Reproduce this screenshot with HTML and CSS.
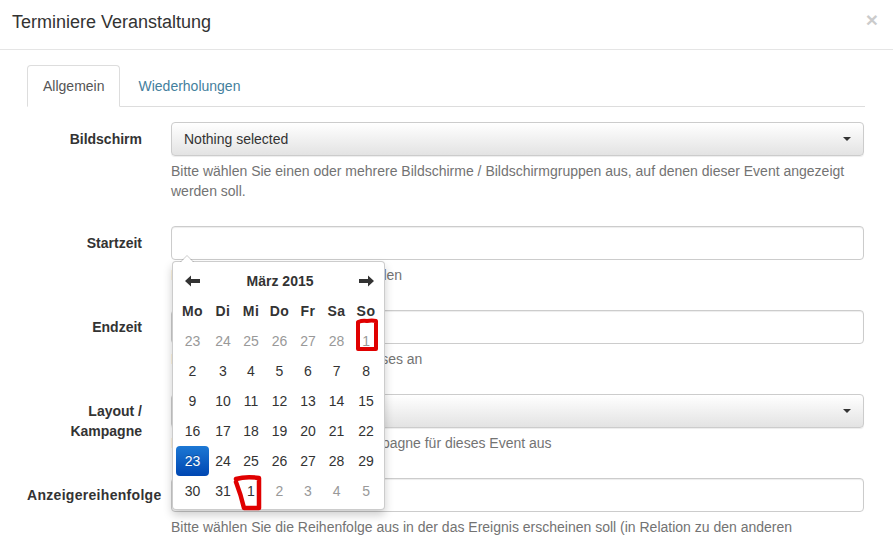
FILE: index.html
```html
<!DOCTYPE html>
<html>
<head>
    <title>Terminiere Veranstaltung</title>
    <link rel="stylesheet" href="styles.css">
</head>
<body>
    <div class="modal-header">
        <button class="close" type="button">&times;</button>
        <h4 class="modal-title">Terminiere Veranstaltung</h4>
    </div>

    <div class="modal-body">
        <ul class="nav-tabs">
            <li class="active"><a href="#">Allgemein</a></li>
            <li><a href="#">Wiederholungen</a></li>
        </ul>

        <div class="form">
            <div class="form-group">
                <label class="control-label">Bildschirm</label>
                <div class="control">
                    <button class="select-btn" type="button">
                        <span>Nothing selected</span>
                        <span class="caret"></span>
                    </button>
                    <p class="help-block">Bitte wählen Sie einen oder mehrere Bildschirme / Bildschirmgruppen aus, auf denen dieser Event angezeigt werden soll.</p>
                </div>
            </div>

            <div class="form-group">
                <label class="control-label">Startzeit</label>
                <div class="control">
                    <div class="date-wrap">
                        <input type="text" class="form-control">

                        <div class="datepicker">
                            <table>
                                <colgroup>
                                    <col style="width: 33px">
                                    <col style="width: 28px">
                                    <col style="width: 28px">
                                    <col style="width: 29px">
                                    <col style="width: 28px">
                                    <col style="width: 29px">
                                    <col style="width: 30px">
                                </colgroup>
                                <thead>
                                    <tr>
                                        <th class="prev">
                                            <svg width="15" height="12" viewBox="0 0 15 12"><path d="M0 6 L6 0.5 L6 4 L15 4 L15 8 L6 8 L6 11.5 Z" fill="#333"/></svg>
                                        </th>
                                        <th class="switch" colspan="5">März 2015</th>
                                        <th class="next">
                                            <svg width="15" height="12" viewBox="0 0 15 12"><path d="M15 6 L9 0.5 L9 4 L0 4 L0 8 L9 8 L9 11.5 Z" fill="#333"/></svg>
                                        </th>
                                    </tr>
                                    <tr class="dow">
                                        <th>Mo</th><th>Di</th><th>Mi</th><th>Do</th><th>Fr</th><th>Sa</th><th>So</th>
                                    </tr>
                                </thead>
                                <tbody>
                                    <tr>
                                        <td class="old">23</td><td class="old">24</td><td class="old">25</td><td class="old">26</td><td class="old">27</td><td class="old">28</td><td class="old">1</td>
                                    </tr>
                                    <tr>
                                        <td>2</td><td>3</td><td>4</td><td>5</td><td>6</td><td>7</td><td>8</td>
                                    </tr>
                                    <tr>
                                        <td>9</td><td>10</td><td>11</td><td>12</td><td>13</td><td>14</td><td>15</td>
                                    </tr>
                                    <tr>
                                        <td>16</td><td>17</td><td>18</td><td>19</td><td>20</td><td>21</td><td>22</td>
                                    </tr>
                                    <tr>
                                        <td class="active">23</td><td>24</td><td>25</td><td>26</td><td>27</td><td>28</td><td>29</td>
                                    </tr>
                                    <tr>
                                        <td>30</td><td>31</td><td>1</td><td class="new">2</td><td class="new">3</td><td class="new">4</td><td class="new">5</td>
                                    </tr>
                                </tbody>
                            </table>

                            <!-- red markers drawn on the screenshot -->
                            <svg class="mark mark-sun" width="24" height="34" viewBox="0 0 24 34">
                                <path d="M3 4 Q8 2 12 3 Q17 2 21 3 L21 31 L3 31 Z" fill="none" stroke="#e00000" stroke-width="4" stroke-linejoin="round"/>
                            </svg>
                            <svg class="mark mark-wed" width="30" height="40" viewBox="0 0 30 40">
                                <path d="M4 6 Q14 3 27 5 L27 35 L12 35 Q9 22 4 9" fill="none" stroke="#e00000" stroke-width="4.5" stroke-linejoin="round" stroke-linecap="round"/>
                            </svg>
                        </div>
                    </div>
                    <p class="help-block">Bitte Startdatum und Startzeit wählen</p>
                </div>
            </div>

            <div class="form-group">
                <label class="control-label">Endzeit</label>
                <div class="control">
                    <input type="text" class="form-control">
                    <p class="help-block">Bitte geben Sie das Ende des Kurses an</p>
                </div>
            </div>

            <div class="form-group">
                <label class="control-label">Layout / Kampagne</label>
                <div class="control">
                    <button class="select-btn" type="button">
                        <span></span>
                        <span class="caret"></span>
                    </button>
                    <p class="help-block">Bitte wählen Sie Layout oder Kampagne für dieses Event aus</p>
                </div>
            </div>

            <div class="form-group">
                <label class="control-label wide">Anzeigereihenfolge</label>
                <div class="control">
                    <input type="text" class="form-control">
                    <p class="help-block">Bitte wählen Sie die Reihenfolge aus in der das Ereignis erscheinen soll (in Relation zu den anderen Ereignissen)</p>
                </div>
            </div>
        </div>
    </div>
</body>
</html>
```

FILE: styles.css
```css
body {
    margin: 0;
    font-family: "Liberation Sans", Arial, sans-serif;
    font-size: 14px;
    line-height: 20px;
    color: #333;
    background: #fff;
    overflow: hidden;
}
.modal-header {
    padding: 9px 15px 14px 12px;
    border-bottom: 1px solid #e5e5e5;
    height: 26px;
}
.modal-title {
    margin: 0;
    font-size: 18px;
    font-weight: normal;
    line-height: 26px;
}
.close {
    float: right;
    margin-top: 0;
    padding: 0;
    border: none;
    background: none;
    font-family: "Liberation Sans", Arial, sans-serif;
    font-size: 21px;
    font-weight: bold;
    line-height: 1;
    color: #000;
    opacity: 0.2;
    cursor: pointer;
}
.modal-body {
    padding: 15px 28px 0 27px;
}
.nav-tabs {
    list-style: none;
    margin: 0;
    padding: 0;
    display: flex;
    border-bottom: 1px solid #ddd;
}
.nav-tabs li {
    margin-right: 2px;
    margin-bottom: -1px;
}
.nav-tabs a {
    display: block;
    padding: 10px 15px;
    border: 1px solid transparent;
    border-radius: 4px 4px 0 0;
    color: #44809d;
    text-decoration: none;
}
.nav-tabs .active a {
    color: #555;
    background: #fff;
    border-color: #ddd #ddd transparent;
}
.form {
    padding-top: 15px;
}
.form-group {
    display: grid;
    grid-template-columns: 130px 1fr;
    margin-bottom: 15px;
}
.control-label {
    padding: 7px 15px 0 0;
    text-align: right;
    font-weight: bold;
}
.control-label.wide {
    padding-right: 0;
    text-align: left;
    white-space: nowrap;
    letter-spacing: 0.3px;
}
.control {
    padding: 0 1px 0 14px;
}
.form-control {
    display: block;
    box-sizing: border-box;
    width: 100%;
    height: 34px;
    padding: 6px 12px;
    border: 1px solid #ccc;
    border-radius: 4px;
    box-shadow: inset 0 1px 1px rgba(0, 0, 0, 0.075);
    font: inherit;
}
.select-btn {
    display: flex;
    align-items: center;
    justify-content: space-between;
    box-sizing: border-box;
    width: 100%;
    height: 34px;
    padding: 6px 12px;
    border: 1px solid #ccc;
    border-radius: 4px;
    background: linear-gradient(to bottom, #fff 0%, #e3e3e3 100%);
    box-shadow: 0 1px 1px rgba(0, 0, 0, 0.075);
    font: inherit;
    color: #333;
    text-align: left;
}
.caret {
    width: 0;
    height: 0;
    border-top: 4px solid #333;
    border-left: 4px solid transparent;
    border-right: 4px solid transparent;
}
.help-block {
    margin: 5px 0 10px;
    color: #737373;
}
.date-wrap {
    position: relative;
}
.datepicker {
    position: absolute;
    top: 35px;
    left: 1px;
    z-index: 10;
    width: 205px;
    padding: 4px 3px 3px;
    background: #fff;
    border: 1px solid rgba(0, 0, 0, 0.2);
    border-radius: 4px;
    box-shadow: 0 5px 10px rgba(0, 0, 0, 0.2);
}
.datepicker:before {
    content: "";
    position: absolute;
    top: -7px;
    left: 7px;
    border-left: 7px solid transparent;
    border-right: 7px solid transparent;
    border-bottom: 7px solid rgba(0, 0, 0, 0.2);
}
.datepicker:after {
    content: "";
    position: absolute;
    top: -6px;
    left: 8px;
    border-left: 6px solid transparent;
    border-right: 6px solid transparent;
    border-bottom: 6px solid #fff;
}
.datepicker table {
    border-collapse: collapse;
    table-layout: fixed;
    width: 205px;
}
.datepicker th,
.datepicker td {
    height: 30px;
    padding: 0;
    text-align: center;
}
.datepicker th {
    font-weight: bold;
}
.datepicker .dow th {
    letter-spacing: 0.5px;
}
.datepicker th svg {
    display: block;
    margin: 0 auto;
}
.datepicker .old,
.datepicker .new {
    color: #999;
}
.datepicker td.active {
    color: #fff;
    background: linear-gradient(to bottom, #1c78d4, #0047b2);
    border-radius: 4px;
    text-shadow: 0 -1px 0 rgba(0, 0, 0, 0.25);
}
.mark {
    position: absolute;
    overflow: visible;
}
.mark-sun {
    left: 182px;
    top: 56px;
}
.mark-wed {
    left: 59px;
    top: 211px;
}
```
